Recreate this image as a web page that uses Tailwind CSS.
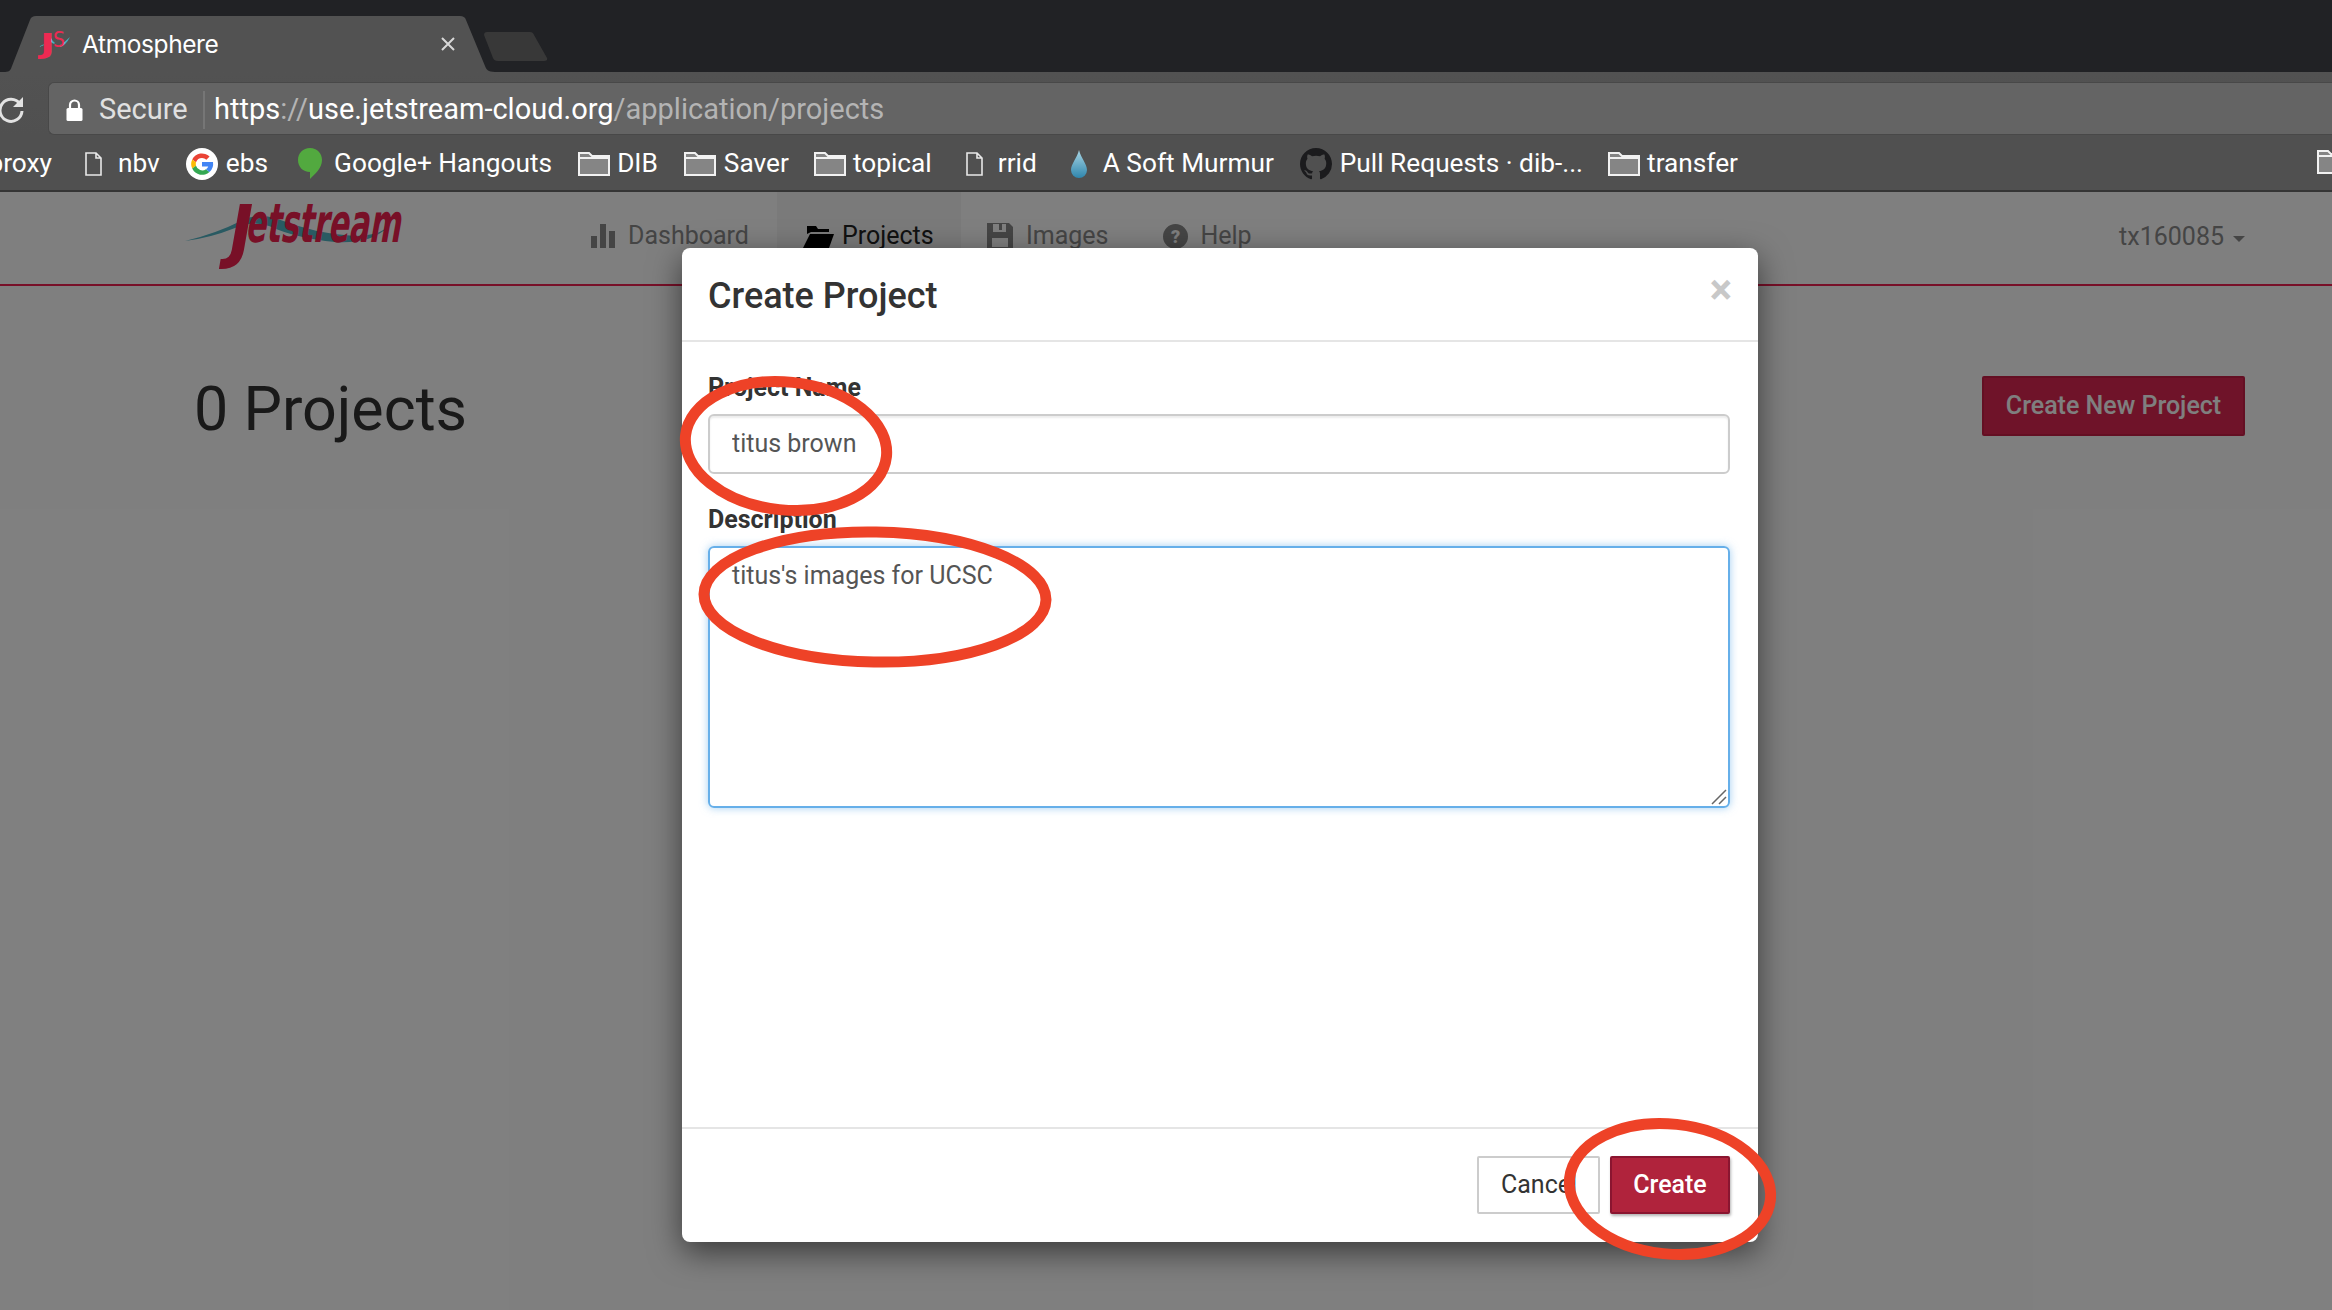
<!DOCTYPE html>
<html>
  <head>
    <title>Atmosphere</title>
    <meta charset="UTF-8" />
    <script src="https://cdn.jsdelivr.net/npm/@tailwindcss/browser@4"></script>
  </head>

  <body class="w-[2332px] h-[1310px] overflow-hidden bg-white font-['Roboto',sans-serif]">
    <!-- Browser chrome -->
    <div class="h-[72px] bg-[#212225] flex items-end overflow-hidden">
      <div class="relative w-[490px] h-[56px] ml-[5px] flex items-center text-white shrink-0">
        <svg class="absolute inset-0" width="490" height="56" viewBox="0 0 490 56">
          <path d="M0 56 C5 56 6 53 7 50 L25 4 C26 1 28 0 31 0 L455 0 C458 0 460 1 461 4 L480 50 C481 53 483 56 490 56 Z" fill="#525252" />
        </svg>
        <svg class="relative ml-[33px]" width="32" height="32" viewBox="0 0 32 32">
          <path d="M0 19 Q8 16 13 10 Q15 14 17 15 Q16 17 13 14 Q7 18 0 19Z" fill="#45b3c2" />
          <path d="M22 17 Q27 14 32 9 Q28 17 22 19Z" fill="#45b3c2" />
          <text x="2" y="25" font-family="DejaVu Sans" font-weight="700" font-size="27" fill="#ee2a52" textLength="15" lengthAdjust="spacingAndGlyphs">J</text>
          <text x="15" y="19" font-family="DejaVu Sans" font-size="21" fill="#ee2a52" textLength="12" lengthAdjust="spacingAndGlyphs">S</text>
        </svg>
        <span class="relative ml-[12px] text-[24.5px] font-['Inter',sans-serif] tracking-[-0.4px]">Atmosphere</span>
        <svg class="absolute left-[436px] top-[21px]" width="14" height="14" viewBox="0 0 14 14">
          <path d="M1 1 L13 13 M13 1 L1 13" stroke="#d8d8d8" stroke-width="2" />
        </svg>
      </div>
      <svg class="-ml-[11px] mb-[11px]" width="64" height="29" viewBox="0 0 64 29">
        <path d="M0 3 Q0 0 3 0 L46 0 Q49 0 50 3 L63 26 Q64 29 60 29 L14 29 Q10 29 9 26 Z" fill="#383838" />
      </svg>
    </div>

    <div class="h-[63px] pt-[10px] bg-gradient-to-b from-[#525252] to-[#505050] flex items-center">
      <svg class="ml-[-3px]" width="28" height="28" viewBox="0 0 28 28" fill="none">
        <path d="M23 9 A11 11 0 1 0 25 16" stroke="#e2e2e2" stroke-width="3" />
        <path d="M26 2 L26 12 L16 12 Z" fill="#e2e2e2" />
      </svg>
      <div class="ml-[23px] flex-1 h-[53px] pt-[2px] bg-[#646464] border border-[#484848] border-r-0 rounded-l-[6px] flex items-center text-[29px]">
        <svg class="ml-[17px]" width="17" height="22" viewBox="0 0 17 22">
          <path d="M4 10 V6 A4.5 4.5 0 0 1 13 6 V10" fill="none" stroke="#fff" stroke-width="2.2" />
          <rect x="0.5" y="9" width="16" height="13" rx="1.5" fill="#fff" />
        </svg>
        <span class="ml-[16px] text-[#e0e0e0] w-[104px]">Secure</span>
        <span class="w-[2px] h-[38px] bg-[#767676]"></span>
        <span class="ml-[9px] text-white">https<span class="text-[#b4b4b4]">://</span>use.jetstream-cloud.org<span class="text-[#b4b4b4]">/application/projects</span></span>
      </div>
    </div>

    <div class="h-[57px] pt-[2px] bg-[#505050] border-b-2 border-[#353535] flex items-center text-white text-[26.25px] relative overflow-hidden">
      <span class="w-[52px] shrink-0 flex justify-end whitespace-nowrap">proxy</span>
      <svg class="ml-[33px]" width="17" height="24" viewBox="0 0 17 24" fill="none"><path d="M1 1 H11 L16 6 V23 H1 Z M11 1 V6 H16" stroke="#e8e8e8" stroke-width="1.6" /></svg>
      <span class="ml-[16px]">nbv</span>
      <svg class="ml-[26px]" width="32" height="32" viewBox="0 0 32 32">
        <circle cx="16" cy="16" r="16" fill="#fff" />
        <path d="M16 10 A6.5 6.5 0 0 1 20.4 11.7 L23.6 8.5 A11 11 0 0 0 6.2 11.4 L10 14.300 A6.500 6.500 0 0 1 16 10Z" fill="#ea4335" />
        <path d="M10 14.300 L6.200 11.400 A11 11 0 0 0 6.200 20.600 L10 17.700 A6.500 6.500 0 0 1 10 14.300Z" fill="#fbbc05" />
        <path d="M10 17.700 L6.200 20.600 A11 11 0 0 0 23.500 24 L20 21.200 A6.500 6.500 0 0 1 10 17.700Z" fill="#34a853" />
        <path d="M27 14 H16 V18.500 H22.300 A5.500 5.500 0 0 1 20 21.200 L23.500 24 A11 11 0 0 0 27 14Z" fill="#4285f4" />
      </svg>
      <span class="ml-[8px]">ebs</span>
      <svg class="ml-[30px]" width="24" height="31" viewBox="0 0 24 31">
        <path d="M12 0 C19 0 24 5 24 12 C24 20 17 26 12 31 L12 24 C5 24 0 19 0 12 C0 5 5 0 12 0Z" fill="#52a93f" />
      </svg>
      <span class="ml-[12px]">Google+ Hangouts</span>
      <svg class="ml-[26px]" width="32" height="24" viewBox="0 0 32 24"><path d="M1 23 V1 H11 L14 4 H31 V23 Z" fill="#858585" stroke="#f2f2f2" stroke-width="2" /><path d="M1 6 H31" stroke="#f2f2f2" stroke-width="2" /></svg>
      <span class="ml-[7px]">DIB</span>
      <svg class="ml-[26px]" width="32" height="24" viewBox="0 0 32 24"><path d="M1 23 V1 H11 L14 4 H31 V23 Z" fill="#858585" stroke="#f2f2f2" stroke-width="2" /><path d="M1 6 H31" stroke="#f2f2f2" stroke-width="2" /></svg>
      <span class="ml-[8px]">Saver</span>
      <svg class="ml-[25px]" width="32" height="24" viewBox="0 0 32 24"><path d="M1 23 V1 H11 L14 4 H31 V23 Z" fill="#858585" stroke="#f2f2f2" stroke-width="2" /><path d="M1 6 H31" stroke="#f2f2f2" stroke-width="2" /></svg>
      <span class="ml-[7px]">topical</span>
      <svg class="ml-[34px]" width="17" height="24" viewBox="0 0 17 24" fill="none"><path d="M1 1 H11 L16 6 V23 H1 Z M11 1 V6 H16" stroke="#e8e8e8" stroke-width="1.6" /></svg>
      <span class="ml-[15px]">rrid</span>
      <svg class="ml-[33px]" width="18" height="28" viewBox="0 0 18 28">
        <defs><linearGradient id="drop" x1="0" y1="0" x2="0" y2="1"><stop offset="0" stop-color="#a9d6e5" /><stop offset="1" stop-color="#2f86ad" /></linearGradient></defs>
        <path d="M9 0 C11 8 17 14 17 20 A8 8 0 0 1 1 20 C1 14 7 8 9 0Z" fill="url(#drop)" />
      </svg>
      <span class="ml-[15px]">A Soft Murmur</span>
      <svg class="ml-[26px]" width="32" height="32" viewBox="0 0 16 16">
        <path fill="#1b1b1d" d="M8 0C3.58 0 0 3.58 0 8c0 3.54 2.29 6.53 5.47 7.59.4.07.55-.17.55-.38 0-.19-.01-.82-.01-1.490-2.010.37-2.530-.49-2.690-.94-.09-.23-.48-.94-.82-1.130-.28-.15-.68-.52-.01-.53.63-.01 1.080.58 1.230.82.72 1.210 1.870.87 2.330.66.07-.52.28-.87.51-1.070-1.780-.2-3.640-.89-3.640-3.950 0-.87.31-1.590.82-2.150-.08-.2-.36-1.020.08-2.120 0 0 .67-.21 2.200.82.64-.18 1.320-.27 2-.27s1.360.09 2 .27c1.530-1.040 2.200-.82 2.200-.82.44 1.100.16 1.920.08 2.120.51.56.82 1.270.82 2.150 0 3.070-1.870 3.750-3.650 3.950.29.25.54.73.54 1.480 0 1.070-.01 1.930-.01 2.200 0 .21.15.46.55.38A8.010 8.010 0 0 0 16 8c0-4.420-3.580-8-8-8z" />
      </svg>
      <span class="ml-[8px]">Pull Requests · dib-...</span>
      <svg class="ml-[25px]" width="32" height="24" viewBox="0 0 32 24"><path d="M1 23 V1 H11 L14 4 H31 V23 Z" fill="#858585" stroke="#f2f2f2" stroke-width="2" /><path d="M1 6 H31" stroke="#f2f2f2" stroke-width="2" /></svg>
      <span class="ml-[7px]">transfer</span>
      <svg class="absolute left-[2317px] top-[15px]" width="32" height="24" viewBox="0 0 32 24"><path d="M1 23 V1 H11 L14 4 H31 V23 Z" fill="#858585" stroke="#f2f2f2" stroke-width="2" /><path d="M1 6 H31" stroke="#f2f2f2" stroke-width="2" /></svg>
    </div>

    <!-- Page behind the dialog -->
    <div class="relative h-[1118px]">
      <nav class="h-[94px] border-b-2 border-[#f02050] flex items-stretch text-[25px] text-[#8a8a8a]">
        <svg class="ml-[185px] mt-[6px] shrink-0" width="220" height="76" viewBox="0 0 220 76">
          <path d="M0 43 Q30 36 58 22 Q72 15 90 20 Q130 36 170 38 Q190 38 202 30 Q185 46 150 44 Q110 40 84 28 Q68 22 50 30 Q25 40 0 43Z" fill="#52b4c4" />
          <text x="0" y="0" transform="translate(40 57) skewX(-10)" font-family="DejaVu Sans" font-weight="700" font-size="70" fill="#f0204f" textLength="24" lengthAdjust="spacingAndGlyphs">J</text>
          <text x="0" y="0" transform="translate(60 44) skewX(-10)" font-family="DejaVu Sans Condensed, DejaVu Sans" font-weight="700" font-size="54" fill="#f0204f" textLength="155" lengthAdjust="spacingAndGlyphs">etstream</text>
        </svg>
        <div class="ml-[186px] flex items-center h-[88px]">
          <svg width="24" height="24" viewBox="0 0 24 24" fill="#8a8a8a"><rect y="12" width="6" height="12" /><rect x="9" width="6" height="24" /><rect x="18" y="7" width="6" height="17" /></svg>
          <span class="ml-[13px]">Dashboard</span>
        </div>
        <div class="ml-[28px] w-[184px] bg-[#f4f4f4] flex items-center pb-[4px] text-[#222]">
          <svg class="ml-[26px]" width="31" height="24" viewBox="0 0 31 24" fill="#000"><path d="M4 10 V2 H13 L15 5 H26 V8 H8 Z" /><path d="M7 10 H31 L26 24 H0 Z" /></svg>
          <span class="ml-[8px]">Projects</span>
        </div>
        <div class="ml-[26px] flex items-center h-[88px]">
          <svg width="26" height="26" viewBox="0 0 26 26" fill="#8a8a8a"><path d="M0 0 H22 L26 4 V26 H0 Z M6 1 V9 H19 V1 H15 V7 H12 V1 Z M5 15 V24 H21 V15 Z" fill-rule="evenodd" /></svg>
          <span class="ml-[13px]">Images</span>
        </div>
        <div class="ml-[55px] flex items-center h-[88px]">
          <svg width="25" height="25" viewBox="0 0 25 25"><circle cx="12.500" cy="12.500" r="12.500" fill="#8a8a8a" /><text x="12.500" y="19" text-anchor="middle" font-family="Roboto" font-weight="900" font-size="18" fill="#fff">?</text></svg>
          <span class="ml-[12px]">Help</span>
        </div>
        <div class="ml-auto mr-[87px] flex items-center h-[90px]">
          <span>tx160085</span>
          <span class="ml-[9px] mt-[3px] border-x-[6px] border-x-transparent border-t-[6px] border-t-[#8a8a8a]"></span>
        </div>
      </nav>
      <div class="flex items-start justify-between pl-[194px] pr-[87px] pt-[90px]">
        <h1 class="text-[61px] leading-[70px] text-[#333] -mt-[2px]">0 Projects</h1>
        <button class="h-[60px] w-[263px] bg-[#de2752] border-2 border-[#c81f47] rounded-[2px] text-white text-[25px] font-medium">Create New Project</button>
      </div>
    </div>

    <!-- Backdrop -->
    <div class="absolute inset-x-0 top-[192px] h-[1118px] bg-black/50"></div>

    <!-- Dialog -->
    <div class="absolute left-[682px] top-[248px] w-[1076px] h-[994px] bg-white rounded-[8px] shadow-[0_10px_32px_rgba(0,0,0,0.55)] flex flex-col">
      <div class="h-[94px] border-b-2 border-[#e5e5e5] flex justify-between px-[26px]">
        <h2 class="text-[36px] leading-[96px] font-medium text-[#333]">Create Project</h2>
        <span class="text-[42px] leading-[83px] font-bold text-[#c8c8c8]">×</span>
      </div>
      <div class="flex-1 px-[26px] pt-[30px]">
        <label class="block text-[25px] leading-[32px] font-bold text-[#333]">Project Name</label>
        <input class="block w-[1022px] h-[60px] mt-[10px] px-[22px] pb-[2px] border-2 border-[#ccc] rounded-[6px] text-[25px] text-[#555] shadow-[inset_0_2px_2px_rgba(0,0,0,0.08)]" value="titus brown" />
        <label class="block mt-[30px] text-[25px] leading-[32px] font-bold text-[#333]">Description</label>
        <div class="relative w-[1022px] mt-[10px]">
          <textarea class="block w-full h-[262px] px-[22px] py-[12px] border-2 border-[#66afe9] rounded-[6px] text-[25px] leading-[32px] text-[#555] outline-none resize-none shadow-[0_0_8px_rgba(102,175,233,0.6)]">titus's images for UCSC</textarea>
          <svg class="absolute right-[3px] bottom-[3px]" width="16" height="16" viewBox="0 0 16 16" fill="none" stroke="#666" stroke-width="1.5"><path d="M1 15 L15 1 M8 15 L15 8" /></svg>
        </div>
      </div>
      <div class="h-[115px] border-t-2 border-[#e5e5e5] flex justify-end items-start gap-[10px] pt-[27px] pr-[28px] text-[25px]">
        <button class="w-[123px] h-[58px] border-2 border-[#ccc] rounded-[2px] text-[#333] text-left pl-[22px] overflow-hidden">Cancel</button>
        <button class="w-[120px] h-[58px] bg-[#b0233c] border-2 border-[#8a1530] rounded-[2px] text-white font-medium shadow-[1px_2px_3px_rgba(0,0,0,0.3)]">Create</button>
      </div>
    </div>

    <!-- Red hand-drawn annotations -->
    <svg class="absolute inset-0 pointer-events-none" width="2332" height="1310" viewBox="0 0 2332 1310" fill="none" stroke="#ee4227" stroke-width="11">
      <ellipse cx="786" cy="446" rx="101" ry="64" transform="rotate(6 786 446)" />
      <ellipse cx="875" cy="597" rx="171" ry="65" transform="rotate(1 875 597)" />
      <ellipse cx="1670" cy="1189" rx="101" ry="65" transform="rotate(6 1670 1189)" />
    </svg>
  </body>
</html>
